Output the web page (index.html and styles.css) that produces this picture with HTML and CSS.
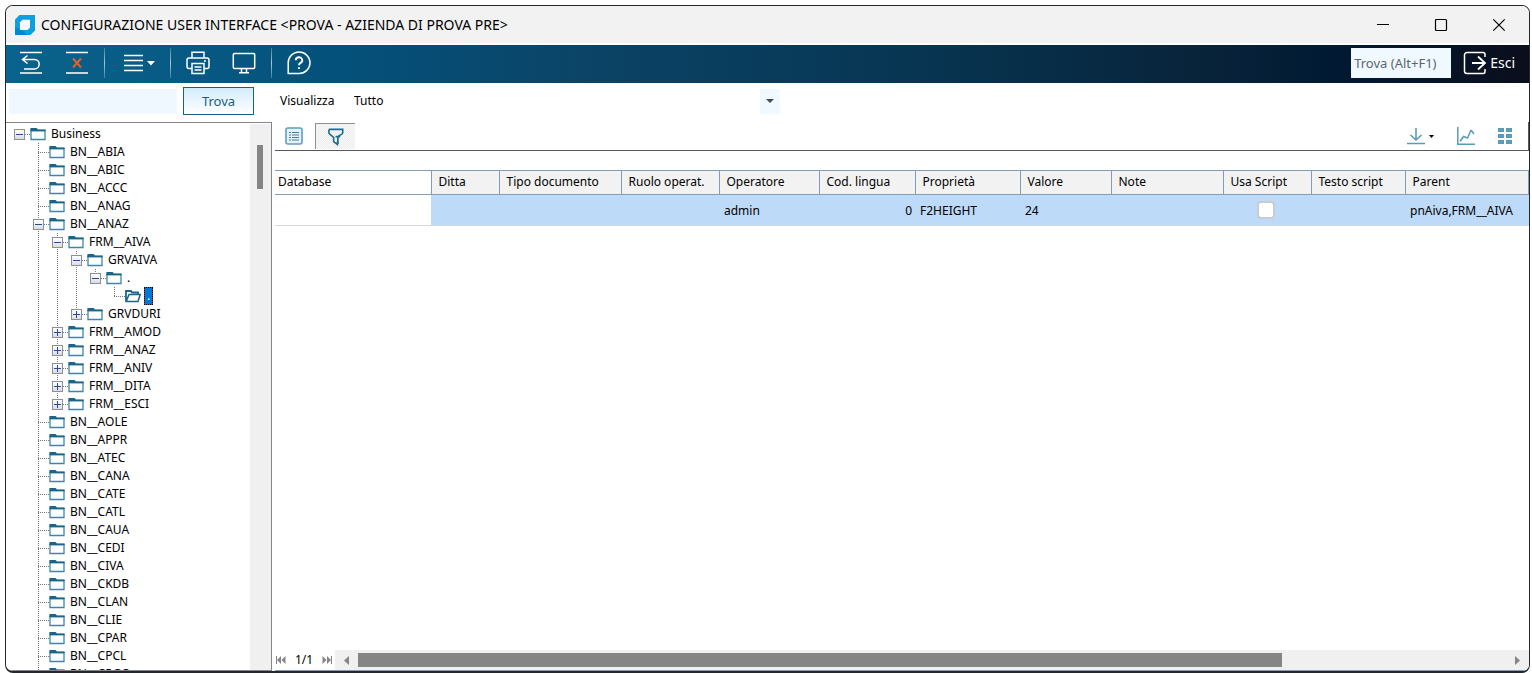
FILE: index.html
```html
<!DOCTYPE html>
<html lang="it">
<head>
<meta charset="utf-8">
<title>Configurazione User Interface</title>
<link rel="stylesheet" href="styles.css">
</head>
<body>
<svg class="sprite" aria-hidden="true">
  <symbol id="folder" viewBox="0 0 16 14">
    <path d="M1 3.500h14v9H1z" fill="#fff" stroke="#3f86a6" stroke-width="1.300"/>
    <path d="M.4 4.200V1h6.200l1.400 1.600h7.600v1.600z" fill="#1b6688"/>
  </symbol>
  <symbol id="folder-open" viewBox="0 0 16 14">
    <path d="M1 12.500V2h5l1 1.500h6V6" fill="none" stroke="#1b6688" stroke-width="1.800"/>
    <path d="M1.200 12.500l2.800-7h11.200l-2.200 7z" fill="#fff" stroke="#1b6688" stroke-width="1.500"/>
  </symbol>
</svg>
<div class="window">
  <header class="titlebar">
    <svg class="app-logo" viewBox="0 0 20 20"><path d="M4.500 0H20v15.500L15.500 20H0V4.500z" fill="#0e9fe0"/><path d="M0 12v8h12l-5-5z" fill="#0785cf"/><path d="M7.500 4.800H15v7.700L12.500 15H5V7.300z" fill="#f4fbff"/></svg>
    <h1 class="title">CONFIGURAZIONE USER INTERFACE &lt;PROVA - AZIENDA DI PROVA PRE&gt;</h1>
    <div class="win-controls">
      <button aria-label="Riduci"><svg viewBox="0 0 14 14"><path d="M1 6.500h12"/></svg></button>
      <button aria-label="Ingrandisci"><svg viewBox="0 0 14 14"><rect x="1.500" y="1.500" width="11" height="11" rx="1"/></svg></button>
      <button aria-label="Chiudi"><svg viewBox="0 0 14 14"><path d="M1.300 1.300l11.400 11.400M12.700 1.300L1.300 12.700"/></svg></button>
    </div>
  </header>

  <nav class="toolbar">
    <button aria-label="Ripristina"><svg class="ico" viewBox="0 0 24 24"><path d="M1 1.500h22M1 22h22" stroke-width="1.600"/><path d="M8.500 4.500l-5 4 5 4M4 8.500h11.500a4.700 4.700 0 0 1 0 9.400H5"/></svg></button>
    <button aria-label="Elimina"><svg class="ico" viewBox="0 0 24 24"><path d="M1 1.500h22M1 22h22" stroke-width="1.600"/><path d="M8 7.500l8 9M16 7.500l-8 9" stroke="#e2622e" stroke-width="1.900"/></svg></button>
    <span class="sep"></span>
    <button class="wide" aria-label="Menu"><svg class="ico" viewBox="0 0 24 24"><path d="M3 4.500h19M3 9.500h19M3 14.500h19M3 19.500h19" stroke-width="1.500"/></svg><svg class="caret" viewBox="0 0 8 5"><path d="M0 0h8L4 4.600z" fill="#fff"/></svg></button>
    <span class="sep"></span>
    <button aria-label="Stampa"><svg class="ico" viewBox="0 0 24 24"><path d="M6 7V1.200h12V7M6 17.500H3a2 2 0 0 1-2-2V9a2 2 0 0 1 2-2h18a2 2 0 0 1 2 2v6.500a2 2 0 0 1-2 2h-3M6 12.500h12v10H6zM8.500 16h7M8.500 19h7"/><path d="M18 10h2"/></svg></button>
    <button aria-label="Anteprima"><svg class="ico" viewBox="0 0 24 24"><path d="M2.500 2.500h19a1.200 1.200 0 0 1 1.200 1.200v12.600a1.200 1.200 0 0 1-1.200 1.200h-19a1.200 1.200 0 0 1-1.200-1.200V3.700a1.200 1.200 0 0 1 1.200-1.200zM9.500 18v3.500M14.500 18v3.500M7 21.800h10"/></svg></button>
    <span class="sep"></span>
    <button aria-label="Aiuto"><svg class="ico" viewBox="0 0 24 24"><path d="M1.200 22.500V12A10.900 10.700 0 1 1 12 22.500z"/><path d="M8.800 9.300a3.200 3 0 1 1 4.700 2.600c-1 .6-1.500 1.100-1.500 2.300M12 16.200v1.800" stroke-width="1.900"/></svg></button>
    <input class="quick" type="text" placeholder="Trova (Alt+F1)" aria-label="Trova (Alt+F1)">
    <button class="exit"><svg class="ico" viewBox="0 0 24 24"><path d="M22 6V3.500a2 2 0 0 0-2-2H4a2.500 2.500 0 0 0-2.500 2.500v16A2.500 2.500 0 0 0 4 22.500h16a2 2 0 0 0 2-2V18"/><path d="M9 12h13M15 5.500l7 6.500-7 6.500" stroke-width="1.800"/></svg>Esci</button>
  </nav>

  <form class="filter">
    <input class="search" type="text" aria-label="Testo da cercare">
    <button class="find" type="button">Trova</button>
    <label class="view-label" for="view">Visualizza</label>
    <div class="combo">
      <select id="view"><option>Tutto</option></select>
      <svg class="combo-arrow" viewBox="0 0 20 25"><path d="M0 0h20v25H0z" fill="#f0f9ff"/><path d="M6 10h8l-4 4z" fill="#3f4a6b"/></svg>
    </div>
  </form>

  <main class="content">
    <aside class="side">
      <ul class="tree" id="tree"></ul>
      <div class="vscroll"><div class="vthumb"></div></div>
    </aside>
    <section class="grid-panel">
      <div class="grid-tools">
        <button class="tool" aria-label="Elenco"><svg viewBox="0 0 18 18" class="ico18"><rect x="1" y="1" width="16" height="16" rx="2" fill="#e4f2f9" stroke="#5f9fbd" stroke-width="1.600"/><path d="M4 5.500h2M4 8h2M4 10.500h2M4 13h2M7 5.500h7M7 8h7M7 10.500h7M7 13h7" stroke="#4b7c9c" stroke-width="1.200"/></svg></button>
        <button class="tool pressed" aria-label="Filtro"><svg viewBox="0 0 18 19" class="ico18"><path d="M1.500 1.500h14.600v3.200c0 1-.5 1.600-1.300 2l-3.300 1.600M1.500 1.500v3.200c0 1 .4 1.600 1.200 2l3.800 3.200v4.500l4 3v-3" fill="none" stroke="#1b6c92" stroke-width="1.700"/><path d="M8.500 9h5M11 9v8" stroke="#1b6c92" stroke-width="1.800"/></svg></button>
        <div class="grid-actions">
          <button class="dl" aria-label="Esporta"><svg viewBox="0 0 18 18" class="ico18"><path d="M9 1v12M3.500 8L9 13l5.500-5M0 16.500h18" fill="none" stroke="#5b9ab8" stroke-width="1.600"/></svg><svg class="caret-s" viewBox="0 0 5 3"><path d="M0 0h5L2.500 3z" fill="#000"/></svg></button>
          <button aria-label="Grafico"><svg viewBox="0 0 18 18" class="ico18"><path d="M.8 0v17.200H18" fill="none" stroke="#5b9ab8" stroke-width="1.500"/><path d="M3.500 14l3-4.500 4 1.500L14 3M14 3l3 4M3.500 14.500v-2" fill="none" stroke="#5b9ab8" stroke-width="1.500"/></svg></button>
          <button aria-label="Colonne"><svg viewBox="0 0 14 16" class="ico14"><path d="M0 0h6v4H0zM8 0h6v4H8zM0 6h6v4H0zM8 6h6v4H8zM0 12h6v4H0zM8 12h6v4H8z" fill="#5b9ab8"/></svg></button>
        </div>
      </div>
      <div class="table-area">
        <table class="data">
          <colgroup><col class="w157"><col class="w68"><col class="w122"><col class="w98"><col class="w100"><col class="w96"><col class="w105"><col class="w91"><col class="w112"><col class="w88"><col class="w94"><col></colgroup>
          <thead><tr><th class="lead">Database</th><th>Ditta</th><th>Tipo documento</th><th>Ruolo operat.</th><th>Operatore</th><th>Cod. lingua</th><th>Proprietà</th><th>Valore</th><th>Note</th><th>Usa Script</th><th>Testo script</th><th>Parent</th></tr></thead>
          <tbody><tr><td class="lead"></td><td></td><td></td><td></td><td>admin</td><td class="num">0</td><td>F2HEIGHT</td><td>24</td><td></td><td class="mid"><input class="check" type="checkbox" aria-label="Usa Script"></td><td></td><td>pnAiva,FRM__AIVA</td></tr></tbody>
        </table>
      </div>
      <footer class="pager">
        <button aria-label="Primo"><svg viewBox="0 0 10 8"><path d="M0 0h1v8H0zM5 0v8L1 4zM9.500 0v8l-4-4z"/></svg></button>
        <span class="page">1/1</span>
        <button aria-label="Ultimo"><svg viewBox="0 0 10 8"><path d="M9 0h1v8H9zM5 0v8l4-4zM.5 0v8l4-4z"/></svg></button>
        <div class="hscroll">
          <button aria-label="Scorri a sinistra"><svg class="arr" viewBox="0 0 5 9"><path d="M5 0v9L0 4.500z"/></svg></button>
          <div class="htrack"><div class="hthumb"></div></div>
          <button aria-label="Scorri a destra"><svg class="arr" viewBox="0 0 5 9"><path d="M0 0v9l5-4.500z"/></svg></button>
        </div>
      </footer>
    </section>
  </main>
</div>
<script src="tree.js"></script>
</body>
</html>
```
FILE: styles.css
```css
* { box-sizing: border-box; }

body {
  margin: 0;
  height: 100vh;
  padding: 5px 2px 0 5px;
  background: #fff;
  color: #000;
  font-family: "Noto Sans", Tahoma, sans-serif;
  font-size: 12px;
  line-height: 18px;
}

button {
  display: flex;
  align-items: center;
  justify-content: center;
  margin: 0;
  padding: 0;
  border: 0;
  background: none;
  color: inherit;
  font: inherit;
}

input, select {
  margin: 0;
  border: 0;
  border-radius: 0;
  font: inherit;
  color: inherit;
}

h1, ul { margin: 0; padding: 0; }
svg { display: block; flex: none; }
.sprite { display: none; }

.window {
  display: flex;
  flex-direction: column;
  height: 100%;
  overflow: hidden;
  border: 1px solid #24272c;
  border-bottom-width: 2px;
  border-radius: 8px;
  background: #fff;
}

.titlebar {
  display: flex;
  align-items: center;
  flex: none;
  height: 37px;
  padding: 0 1px 0 9px;
  background: #f2f2f2;
}
.app-logo { width: 20px; height: 20px; }
.title {
  flex: 1;
  padding-left: 6px;
  font-family: "Noto Sans", "Segoe UI", sans-serif;
  font-size: 14px;
  font-weight: 400;
  white-space: nowrap;
}
.win-controls { display: flex; }
.win-controls button { width: 58px; height: 36px; }
.win-controls svg { width: 14px; height: 14px; fill: none; stroke: #000; stroke-width: 1.2; }

.toolbar {
  display: flex;
  align-items: center;
  flex: none;
  height: 38px;
  margin-top: 2px;
  padding: 0 14px 2px 2px;
  background: linear-gradient(90deg, #0a638c 0, #04517b 22%, #0b4467 38%, #073552 60%, #08243b 78%, #011a33 87%, #0a0e1c 100%);
  color: #fff;
}
.toolbar button { width: 46px; height: 34px; }
.toolbar .wide { width: 57px; gap: 2px; }
.toolbar .exit { width: auto; gap: 3px; font-size: 14px; }
.ico { width: 24px; height: 24px; fill: none; stroke: #fff; stroke-width: 1.5; }
.caret { width: 8px; height: 5px; }
.sep { width: 1px; height: 30px; margin: 0 4px; background: linear-gradient(#3d7f9f, #a9c6d3, #3d7f9f); }
.quick {
  width: 100px;
  height: 30px;
  margin: 0 12px 0 auto;
  padding: 0 3px;
  background: #f0f9ff;
  font-size: 13px;
}
.quick::placeholder { color: #5d6470; opacity: 1; }

.filter {
  display: flex;
  align-items: center;
  flex: none;
  height: 39px;
  padding: 0 0 3px 3px;
}
.search { width: 168px; height: 25px; background: #f0f8ff; }
.find {
  width: 71px;
  height: 28px;
  margin-left: 6px;
  border: 1px solid #195f84;
  background: linear-gradient(#d3ecfc, #fff);
  color: #195f84;
  font-size: 13px;
}
.view-label { width: 74px; margin-left: 26px; }
.combo { display: grid; width: 426px; align-items: center; }
.combo > * { grid-area: 1 / 1; }
.combo select { width: 100%; height: 25px; padding: 0; appearance: none; background: #fff; }
.combo-arrow { width: 20px; height: 25px; justify-self: end; pointer-events: none; }

.content { display: flex; flex: 1; min-height: 0; }

.side {
  display: flex;
  flex: none;
  width: 266px;
  border: 1px solid #85868c;
  border-width: 1px 1px 1px 0;
}
.tree { flex: 1; padding: 2px 0 0 4px; overflow: hidden; list-style: none; }
.tree ul { padding-left: 19px; list-style: none; }
.tree li {
  background: repeating-linear-gradient(#777 0 1px, #fff 1px 2px) 9px 0 / 1px 100% no-repeat;
}
.tree > li { background: none; }
.tree li:last-child { background-size: 1px 9px; }
.node { display: flex; align-items: center; height: 18px; }
.joint {
  display: flex;
  align-items: center;
  width: 20px;
  height: 18px;
  padding-left: 4px;
  background: repeating-linear-gradient(90deg, #777 0 1px, #fff 1px 2px) 9px 9px / 11px 1px no-repeat;
}
.toggle {
  width: 11px;
  height: 11px;
  border: 1px solid #8b8f96;
  background: linear-gradient(#fff, #d9dce1);
}
.toggle svg { width: 9px; height: 9px; stroke: #2d4a9a; stroke-width: 1; }
.folder { width: 16px; height: 14px; }
.label { margin-left: 5px; white-space: nowrap; }
.label.selected { height: 18px; margin-left: 3px; padding: 0 3px; outline: 1px dotted #000; outline-offset: -1px; background: #0078d7; color: #fff; }

.vscroll { width: 21px; padding: 21px 7px; margin-top: 1px; background: #f0f0f0; }
.vthumb { height: 44px; width: 6px; background: #858585; }

.grid-panel {
  display: flex;
  flex: 1;
  flex-direction: column;
  min-width: 0;
  margin-left: 3px;
}
.grid-tools {
  display: flex;
  flex: none;
  height: 29px;
  border-right: 1px solid #55585c;
  border-bottom: 1px solid #55585c;
}
.tool { width: 38px; height: 26px; margin-top: 1px; }
.pressed {
  margin-left: 2px;
  width: 40px;
  border: solid #909090;
  border-width: 1px 0 0 1px;
  background: repeating-conic-gradient(#ececec 0 25%, #fafafa 0 50%) 0 0 / 2px 2px;
}
.ico18 { width: 18px; height: 18px; }
.ico14 { width: 14px; height: 16px; }
.grid-actions { display: flex; align-items: center; gap: 23px; margin-left: auto; padding-right: 16px; }
.dl { gap: 4px; }
.caret-s { width: 5px; height: 3px; }

.table-area { flex: 1; min-height: 0; padding-top: 19px; overflow: hidden; }
.data { width: 100%; border-collapse: collapse; table-layout: fixed; }
.data th {
  height: 24px;
  padding: 0 0 2px 7px;
  border: 1px solid #839db8;
  border-left: 0;
  background: #f2f2f2;
  font-weight: 400;
  text-align: left;
  white-space: nowrap;
}
.data th.lead { padding-left: 3px; background: #fff; }
.data td { height: 31px; padding: 2px 0 0 5px; border-bottom: 1px solid #d2dbe4; background: #bddaf8; white-space: nowrap; }
.data td.lead { background: #fff; border-color: #d8d8d8; }
.data td.num { padding-right: 3px; text-align: right; }
.data td.mid { padding: 0 2px 0 0; text-align: center; }
.check {
  display: block;
  width: 18px;
  height: 18px;
  margin: 0 auto;
  appearance: none;
  border: 2px solid #c8ccd0;
  border-radius: 4px;
  background: #fff;
}
.w157 { width: 156px; }
.w68 { width: 68px; }
.w122 { width: 122px; }
.w98 { width: 98px; }
.w100 { width: 100px; }
.w96 { width: 96px; }
.w105 { width: 105px; }
.w91 { width: 91px; }
.w112 { width: 112px; }
.w88 { width: 88px; }
.w94 { width: 94px; }

.pager { display: flex; align-items: center; flex: none; height: 21px; border-bottom: 1px solid #839db8; }
.pager button { width: 12px; height: 20px; }
.pager svg { width: 10px; height: 8px; fill: #858585; }
.page { width: 34px; text-align: center; }
.hscroll { display: flex; flex: 1; align-items: center; height: 20px; margin-left: 2px; background: #f0f0f0; }
.hscroll button { width: 23px; }
.hscroll .arr { width: 5px; height: 9px; }
.htrack { flex: 1; }
.hthumb { width: 80.5%; height: 14px; background: #858585; }
```
FILE: tree.js
```js
const leaf = (name) => ({ name });
const business = {
  name: "Business",
  children: [
    leaf("BN__ABIA"), leaf("BN__ABIC"), leaf("BN__ACCC"), leaf("BN__ANAG"),
    {
      name: "BN__ANAZ",
      children: [
        {
          name: "FRM__AIVA",
          children: [
            { name: "GRVAIVA", children: [{ name: ".", children: [{ name: ".", selected: true }] }] },
            { name: "GRVDURI", closed: true },
          ],
        },
        ...["FRM__AMOD", "FRM__ANAZ", "FRM__ANIV", "FRM__DITA", "FRM__ESCI"].map((name) => ({ name, closed: true })),
      ],
    },
    ...["AOLE", "APPR", "ATEC", "CANA", "CATE", "CATL", "CAUA", "CEDI", "CIVA", "CKDB", "CLAN", "CLIE", "CPAR", "CPCL", "CPGC"].map((n) => leaf("BN__" + n)),
  ],
};

function render(node) {
  const toggle = node.children || node.closed
    ? `<button class="toggle" aria-label="${node.closed ? "Espandi" : "Comprimi"}"><svg viewBox="0 0 9 9"><path d="M1 4.5h7${node.closed ? "M4.500 1v7" : ""}"/></svg></button>`
    : "";
  const icon = node.selected ? "folder-open" : "folder";
  const kids = node.children ? `<ul>${node.children.map(render).join("")}</ul>` : "";
  return `<li><div class="node"><span class="joint">${toggle}</span><svg class="folder"><use href="#${icon}"/></svg><span class="label${node.selected ? " selected" : ""}">${node.name}</span></div>${kids}</li>`;
}

document.getElementById("tree").innerHTML = render(business);
```
